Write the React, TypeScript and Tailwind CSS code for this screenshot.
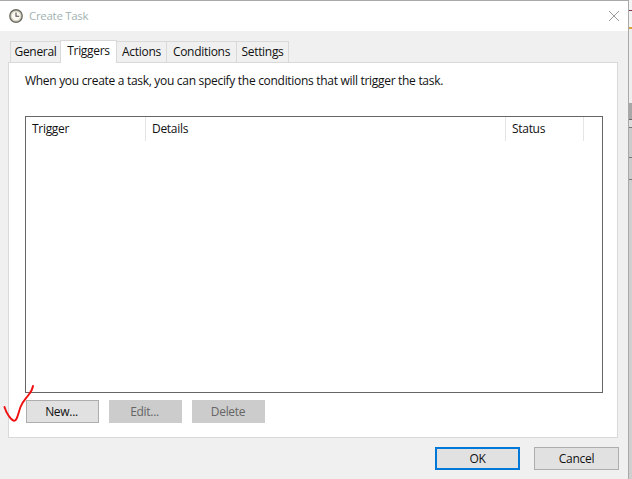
import React from "react";

const tabs = [
  { label: "General", width: "w-[51px]" },
  { label: "Triggers", width: "w-[57px]" },
  { label: "Actions", width: "w-[51px]" },
  { label: "Conditions", width: "w-[71px]" },
  { label: "Settings", width: "w-[53px]" },
];

function ClockIcon() {
  return (
    <svg width="14" height="14" viewBox="0 0 14 14" fill="none">
      <circle cx="7" cy="7" r="6.2" fill="#d9d5c8" stroke="#6f6c64" strokeWidth="1.4" />
      <circle cx="7" cy="7" r="4.2" fill="#fbfaf4" />
      <path d="M7 3.4V7.3H10.2" stroke="#4f4d48" strokeWidth="1.1" />
    </svg>
  );
}

function CheckMark() {
  return (
    <svg
      className="absolute left-0 top-[384px]"
      width="36"
      height="40"
      viewBox="0 0 36 40"
      fill="none"
    >
      <path
        d="M4.5 23C6 28 10 35.5 14 36.8C17 37 18 30 20.5 23C22.5 17.5 26 14.5 28.5 11C30.5 8.5 32.5 5.5 33 2"
        stroke="#f01010"
        strokeWidth="1.9"
        strokeLinecap="round"
      />
    </svg>
  );
}

// bit of the window behind the dialog, showing at the right edge
function BackWindow() {
  return (
    <div className="flex h-full w-[3px] flex-col bg-[#f4f4f4]">
      <div className="h-[10px]" />
      <div className="h-px bg-[#7a3050]" />
      <div className="h-[16px]" />
      <div className="h-[2px] bg-[#d8a040]" />
      <div className="h-[74px] bg-[#eeeeee]" />
      <div className="h-[16px] bg-[#a8a8a8]" />
      <div className="h-px bg-[#666]" />
      <div className="h-[7px] bg-[#dddddd]" />
      <div className="h-px bg-[#777]" />
      <div className="h-[29px] bg-[#cccccc]" />
      <div className="h-px bg-[#777]" />
      <div className="h-[21px] bg-[#cccccc]" />
      <div className="h-px bg-[#777]" />
      <div className="flex-1 bg-[#cfcfcf]" />
    </div>
  );
}

export default function App() {
  return (
    <div className="relative flex h-[479px] w-[632px] overflow-hidden font-['Open_Sans',sans-serif] text-[12px] tracking-[-0.3px] text-[#111]">
      <div className="flex h-full w-[630px] flex-col border-t border-r border-[#a9a9a9] bg-[#f0f0f0]">
        <div className="flex h-[30px] items-center justify-between bg-white pl-[9px] pr-[8px]">
          <div className="flex items-center gap-[6px]">
            <ClockIcon />
            <span className="text-[11.5px] text-[#a3b3b3]">Create Task</span>
          </div>
          <svg width="12" height="12" viewBox="0 0 12 12" stroke="#9a9a9a" strokeWidth="1">
            <path d="M1 1L11 11M11 1L1 11" />
          </svg>
        </div>

        <div className="flex flex-1 flex-col pl-[8px] pt-[10px]">
          <div className="flex h-[21px] items-end pl-[2px]">
            {tabs.map((tab, i) =>
              tab.label === "Triggers" ? (
                <div
                  key={tab.label}
                  className={`relative z-10 -mb-px -ml-px flex h-[23px] ${tab.width} justify-center border border-b-0 border-[#d9d9d9] bg-white pt-px`}
                >
                  {tab.label}
                </div>
              ) : (
                <div
                  key={tab.label}
                  className={`${i === 0 ? "" : "-ml-px"} flex h-[21px] ${tab.width} items-center justify-center border border-b-0 border-[#d9d9d9] bg-[#f0f0f0]`}
                >
                  {tab.label}
                </div>
              ),
            )}
          </div>

          <div className="flex h-[376px] w-[610px] flex-col border border-[#d9d9d9] bg-white pl-[16px]">
            <p className="mt-[9px] h-[44px]">
              When you create a task, you can specify the conditions that will trigger the task.
            </p>
            <div className="h-[277px] w-[578px] border border-[#666]">
              <div className="flex h-[24px] items-stretch">
                <div className="flex w-[120px] items-center border-r border-[#e5e5e5] pl-[6px]">Trigger</div>
                <div className="flex w-[360px] items-center border-r border-[#e5e5e5] pl-[6px]">Details</div>
                <div className="flex w-[78px] items-center border-r border-[#e5e5e5] pl-[6px]">Status</div>
              </div>
            </div>
            <div className="mt-[7px] flex gap-[10px] pl-[1px]">
              <div className="flex h-[23px] w-[73px] items-center justify-center border border-[#adadad] bg-[#e1e1e1] pr-[2px]">
                New...
              </div>
              <div className="flex h-[23px] w-[73px] items-center justify-center bg-[#cccccc] pr-[2px] text-[#666]">
                Edit...
              </div>
              <div className="flex h-[23px] w-[73px] items-center justify-center bg-[#cccccc] pr-[1px] text-[#666]">
                Delete
              </div>
            </div>
          </div>

          <div className="mt-[9px] flex w-[611px] justify-end gap-[14px]">
            <div className="flex h-[23px] w-[85px] items-center justify-center border-2 border-[#0078d7] bg-[#e1e1e1]">
              OK
            </div>
            <div className="flex h-[23px] w-[85px] items-center justify-center border border-[#adadad] bg-[#e1e1e1]">
              Cancel
            </div>
          </div>
        </div>
      </div>
      <BackWindow />
      <CheckMark />
    </div>
  );
}
